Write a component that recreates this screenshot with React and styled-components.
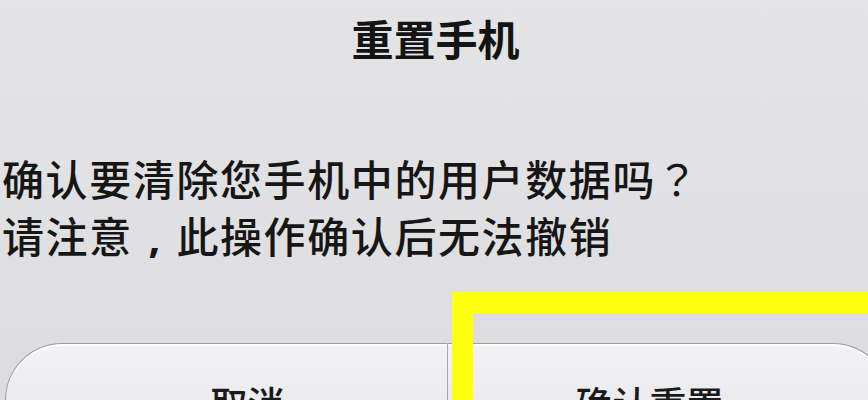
import React from "react";
import styled, { createGlobalStyle } from "styled-components";

const Global = createGlobalStyle`
  html, body { margin: 0; padding: 0; }
  body {
    width: 868px;
    height: 400px;
    overflow: hidden;
    background: linear-gradient(180deg, #e4e4e6 0%, #e0e0e2 60%, #dcdcde 100%);
    font-family: "Noto Sans CJK SC", "Noto Sans", sans-serif;
    color: #111;
  }
`;

const Screen = styled.div`
  position: relative;
  width: 868px;
  height: 400px;
  overflow: hidden;
  display: flex;
  flex-direction: column;
`;

const Title = styled.h1`
  margin: 0;
  padding-top: 10px;
  padding-left: 3px;
  height: 56px;
  text-align: center;
  font-size: 42px;
  line-height: 56px;
  font-weight: 700;
  color: #141414;
`;

const Message = styled.div`
  margin-top: 83px;
  padding-left: 2px;
  font-size: 42px;
  line-height: 57px;
  letter-spacing: 1.6px;
  font-weight: 500;
  color: #161616;
`;

const Line = styled.p`
  margin: 0;
  white-space: nowrap;
`;

const Punct = styled.span`
  font-family: "Noto Sans CJK TC", "Noto Sans CJK SC", sans-serif;
  font-weight: 400;
`;

const Comma = styled.span`
  display: inline-block;
  width: 43.6px;
  text-align: center;
  letter-spacing: 0;
  font-family: "Noto Sans", "Noto Sans CJK SC", sans-serif;
  font-weight: 700;
`;

const ButtonRow = styled.div`
  position: absolute;
  display: flex;
  left: 5px;
  top: 343px;
  width: 885px;
  height: 120px;
`;

const Button = styled.div`
  flex: 0 0 ${(p) => p.$w}px;
  box-sizing: border-box;
  height: 120px;
  display: flex;
  justify-content: center;
  align-items: flex-start;
  padding-top: 37px;
  padding-left: ${(p) => p.$pl || 0}px;
  padding-right: ${(p) => p.$pr || 0}px;
  font-size: 37px;
  line-height: 44px;
  font-weight: 500;
  color: #1a1a1a;
  background: linear-gradient(180deg, #f3f3f5 0%, #ececee 40%, #e8e8ea 100%);
  border-top: 1px solid #9c9c9e;
  box-shadow: inset 0 2px 0 #ffffff;
  border-left: ${(p) => (p.$side === "left" ? "1px solid #9c9c9e" : "1px solid #a8a8aa")};
  border-right: ${(p) => (p.$side === "right" ? "1px solid #9c9c9e" : "none")};
  border-radius: ${(p) => (p.$side === "left" ? "57px 0 0 0" : "0 57px 0 0")};
`;

const Highlight = styled.div`
  position: absolute;
  left: 452px;
  top: 292px;
  width: 440px;
  height: 140px;
  border-top: 21px solid #ffff10;
  border-left: 21px solid #ffff10;
  filter: blur(0.6px);
  pointer-events: none;
`;

export default function App() {
  return (
    <>
      <Global />
      <Screen>
        <Title>重置手机</Title>
        <Message>
          <Line>确认要清除您手机中的用户数据吗<Punct>？</Punct></Line>
          <Line>请注意<Comma>,</Comma>此操作确认后无法撤销</Line>
        </Message>
        <ButtonRow>
          <Button $side="left" $w={442} $pl={42}>取消</Button>
          <Button $side="right" $w={443} $pr={38}>确认重置</Button>
        </ButtonRow>
        <Highlight />
      </Screen>
    </>
  );
}
